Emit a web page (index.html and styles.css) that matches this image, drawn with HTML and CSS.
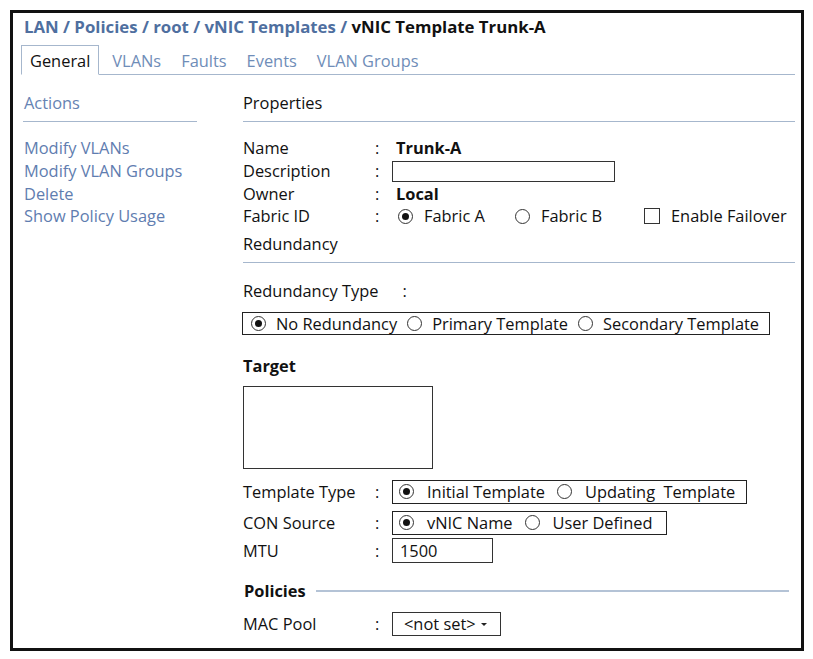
FILE: index.html
```html
<!DOCTYPE html>
<html>
<head>
<meta charset="utf-8">
<link rel="stylesheet" href="styles.css">
</head>
<body>
<div class="frame">
  <div class="crumb"><span class="path">LAN / Policies / root / vNIC Templates / </span><span class="cur">vNIC Template Trunk-A</span></div>
  <div class="tabs">
    <div class="tab active">General</div>
    <div class="tab first">VLANs</div>
    <div class="tab">Faults</div>
    <div class="tab">Events</div>
    <div class="tab">VLAN Groups</div>
  </div>
  <div class="body">
    <div class="left">
      <div class="sechead blue">Actions</div>
      <div class="links">
        <div class="row">Modify VLANs</div>
        <div class="row">Modify VLAN Groups</div>
        <div class="row">Delete</div>
        <div class="row">Show Policy Usage</div>
      </div>
    </div>
    <div class="right">
      <div class="sechead">Properties</div>
      <div class="props">
        <div class="row"><span class="lbl">Name</span><span class="colon">:</span><b class="val">Trunk-A</b></div>
        <div class="row"><span class="lbl">Description</span><span class="colon">:</span><span class="desc"></span></div>
        <div class="row"><span class="lbl">Owner</span><span class="colon">:</span><b class="val">Local</b></div>
        <div class="row"><span class="lbl">Fabric ID</span><span class="colon">:</span>
          <span class="opt w-fa"><i class="radio on"></i>Fabric A</span>
          <span class="opt w-fb"><i class="radio"></i>Fabric B</span>
          <span class="opt"><i class="check"></i>Enable Failover</span>
        </div>
      </div>
      <div class="sechead red">Redundancy</div>
      <div class="rtype">Redundancy Type<span class="colon2">:</span></div>
      <div class="group g-red">
        <span class="gopt"><i class="radio on"></i>No Redundancy</span>
        <span class="gopt"><i class="radio"></i>Primary Template</span>
        <span class="gopt"><i class="radio"></i>Secondary Template</span>
      </div>
      <div class="bold target">Target</div>
      <div class="tbox"></div>
      <div class="row boxed r-tt"><span class="lbl">Template Type</span><span class="colon">:</span>
        <div class="group g-tt">
          <span class="gopt wide"><i class="radio on"></i>Initial Template</span>
          <span class="gopt wide"><i class="radio"></i>Updating&nbsp; Template</span>
        </div>
      </div>
      <div class="row boxed r-con"><span class="lbl">CON Source</span><span class="colon">:</span>
        <div class="group g-con">
          <span class="gopt wide"><i class="radio on"></i>vNIC Name</span>
          <span class="gopt wide"><i class="radio"></i>User Defined</span>
        </div>
      </div>
      <div class="row boxed r-mtu"><span class="lbl">MTU</span><span class="colon">:</span><span class="mtu">1500</span></div>
      <div class="policies"><b>Policies</b><span class="pline"></span></div>
      <div class="row boxed r-mac"><span class="lbl">MAC Pool</span><span class="colon">:</span><span class="select">&lt;not set&gt;<span class="caret"></span></span></div>
    </div>
  </div>
</div>
</body>
</html>
```
FILE: styles.css
```css
* { box-sizing: border-box; }
html, body { margin: 0; padding: 0; background: #fff; }
body {
  font-family: "Open Sans", "Noto Sans", sans-serif;
  font-size: 16.4px;
  color: #111;
}
.frame {
  margin: 10px 0 0 10px;
  width: 794px;
  height: 641px;
  border: 3px solid #111;
  padding: 3px 6px 0 8px;
}
.crumb {
  height: 22px;
  line-height: 22px;
  font-weight: bold;
  font-size: 16.8px;
  margin-left: 3px;
  white-space: nowrap;
}
.crumb .path { color: #4f6f9f; }
.crumb .cur { color: #111; }
.tabs {
  margin-top: 7px;
  display: flex;
  border-bottom: 1px solid #a6b7cd;
  height: 30px;
  white-space: nowrap;
}
.tab {
  padding: 0 10px;
  height: 30px;
  line-height: 31px;
  color: #6f8db8;
}
.tab.first { padding-left: 13px; }
.tab.active {
  color: #111;
  padding: 0 8px;
  border: 1px solid #a6b7cd;
  border-bottom: 1px solid #fff;
  background: #fff;
  line-height: 29px;
}
.body { display: flex; }
.left { width: 174px; margin-left: 2px; flex: none; }
.right { flex: 1; margin-left: 46px; }
.sechead {
  margin-top: 17px;
  height: 30px;
  line-height: 22px;
  border-bottom: 1px solid #a6b7cd;
  padding-bottom: 7px;
}
.sechead.blue { color: #6683b3; padding-left: 1px; }
.links, .props { margin-top: 15px; }
.links .row { color: #5f7db0; padding-left: 1px; }
.row {
  height: 22.7px;
  line-height: 22px;
  display: flex;
  align-items: center;
  white-space: nowrap;
}
.lbl { width: 132px; flex: none; }
.colon { width: 17px; flex: none; }
.val { padding-left: 4px; }
b, .bold { font-weight: bold; }
.desc {
  display: inline-block;
  width: 223px;
  height: 21px;
  border: 1px solid #333;
}
.opt { display: inline-flex; align-items: center; }
.w-fa { width: 123px; padding-left: 6px; }
.w-fb { width: 129px; }
.radio {
  display: inline-block;
  width: 15px;
  height: 15px;
  border: 1px solid #333;
  border-radius: 50%;
  position: relative;
  margin-right: 11px;
  flex: none;
}
.radio.on::after {
  content: "";
  position: absolute;
  left: 3px; top: 3px;
  width: 7px; height: 7px;
  border-radius: 50%;
  background: #111;
}
.check {
  display: inline-block;
  width: 16px; height: 16px;
  border: 1px solid #333;
  margin-right: 11px;
}
.sechead.red { margin-top: 5px; }
.rtype {
  margin-top: 17px;
  height: 22px;
  line-height: 22px;
}
.colon2 { margin-left: 24px; }
.group {
  display: inline-flex;
  align-items: center;
  border: 1px solid #222;
  height: 23px;
  white-space: nowrap;
  flex: none;
}
.g-red { margin-top: 10px; margin-left: -1px; padding-left: 8px; width: 528px; }
.gopt { display: inline-flex; align-items: center; margin-right: 10px; }
.gopt .radio { margin-right: 10px; }
.gopt.wide .radio { margin-right: 13px; }
.gopt.wide { margin-right: 12px; }
.target { margin-top: 19px; height: 22px; line-height: 22px; }
.tbox {
  margin-top: 9px;
  width: 190px;
  height: 83px;
  border: 1px solid #333;
}
.row.boxed { height: 24px; }
.r-tt { margin-top: 11px; }
.g-tt { width: 355px; padding-left: 6px; height: 24px; }
.r-con { margin-top: 7px; }
.g-con { width: 275px; padding-left: 6px; height: 24px; }
.r-mtu { margin-top: 4px; height: 25px; }
.mtu {
  display: inline-block;
  width: 101px;
  height: 25px;
  border: 1px solid #333;
  padding-left: 7px;
  line-height: 23px;
}
.policies {
  margin-top: 17px;
  height: 22px;
  display: flex;
  align-items: center;
  padding-left: 1px;
}
.pline {
  flex: 1;
  margin: 0 6px 0 10px;
  height: 2px;
  background: #b4c3d6;
}
.r-mac { margin-top: 10px; }
.select {
  display: inline-flex;
  align-items: center;
  width: 109px;
  height: 24px;
  border: 1px solid #333;
  padding-left: 11px;
}
.caret {
  width: 0; height: 0;
  border-left: 3px solid transparent;
  border-right: 3px solid transparent;
  border-top: 3px solid #222;
  margin-left: 5px;
  margin-top: 2px;
}
```
